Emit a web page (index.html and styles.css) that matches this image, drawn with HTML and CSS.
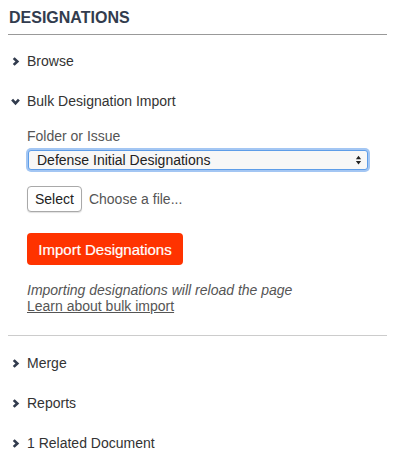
FILE: index.html
```html
<!DOCTYPE html>
<html>
<head>
<meta charset="utf-8">
<link rel="stylesheet" href="styles.css">
</head>
<body>
<div class="panel">
  <h2 class="panel-title">DESIGNATIONS</h2>
  <ul class="sections">
    <li class="section">
      <div class="section-head">
        <svg class="chev" viewBox="0 0 8 8"><path d="M2.4 1 L5.6 4 L2.4 7" /></svg>
        <span>Browse</span>
      </div>
    </li>
    <li class="section open">
      <div class="section-head">
        <svg class="chev" viewBox="0 0 8 8"><path d="M1 2.4 L4 5.6 L7 2.4" /></svg>
        <span>Bulk Designation Import</span>
      </div>
      <div class="section-body">
        <label class="field-label">Folder or Issue</label>
        <div class="select-wrap">
          <select class="select">
            <option>Defense Initial Designations</option>
          </select>
          <svg class="select-arrows" viewBox="0 0 8 12"><path d="M4 1 L7 5 L1 5 Z M4 11 L7 7 L1 7 Z" /></svg>
        </div>
        <div class="file-row">
          <button class="btn-select">Select</button>
          <span class="file-name">Choose a file...</span>
        </div>
        <button class="btn-import">Import Designations</button>
        <p class="note">Importing designations will reload the page</p>
        <a class="learn" href="#">Learn about bulk import</a>
      </div>
    </li>
    <li class="section">
      <div class="section-head">
        <svg class="chev" viewBox="0 0 8 8"><path d="M2.4 1 L5.6 4 L2.4 7" /></svg>
        <span>Merge</span>
      </div>
    </li>
    <li class="section">
      <div class="section-head">
        <svg class="chev" viewBox="0 0 8 8"><path d="M2.4 1 L5.6 4 L2.4 7" /></svg>
        <span>Reports</span>
      </div>
    </li>
    <li class="section">
      <div class="section-head">
        <svg class="chev" viewBox="0 0 8 8"><path d="M2.4 1 L5.6 4 L2.4 7" /></svg>
        <span>1 Related Document</span>
      </div>
    </li>
  </ul>
</div>
</body>
</html>
```
FILE: styles.css
```css
* { box-sizing: border-box; }
html, body { margin: 0; padding: 0; background: #fff; }
body {
  font-family: "Liberation Sans", Arial, sans-serif;
  color: #333;
  padding: 8px 9px 0 8px;
}
.panel { width: 379px; }
.panel-title {
  margin: 0;
  font-size: 16px;
  font-weight: bold;
  line-height: 20px;
  color: #323c4e;
  padding: 0 0 6px 1px;
  border-bottom: 1px solid #999;
}
.sections {
  list-style: none;
  margin: 0;
  padding: 6px 0 0 0;
}
.section-head {
  display: flex;
  align-items: center;
  padding: 10px 0;
  font-size: 14px;
  line-height: 20px;
  color: #333;
}
.chev {
  width: 9px;
  height: 9px;
  margin: 1px 7px 0 3px;
  flex: none;
}
.chev path {
  fill: none;
  stroke: #323c4e;
  stroke-width: 2.4;
  stroke-linecap: butt;
  stroke-linejoin: miter;
}
.section.open {
  border-bottom: 1px solid #ccc;
  margin-bottom: 7px;
}
.section-body {
  padding: 5px 0 21px 19px;
  display: flex;
  flex-direction: column;
  align-items: flex-start;
}
.field-label {
  font-size: 14px;
  line-height: 20px;
  color: #555;
}
.select-wrap {
  position: relative;
  width: 340px;
  margin: 4px 0 0 1px;
}
.select {
  -webkit-appearance: none;
  appearance: none;
  display: block;
  width: 340px;
  height: 20px;
  margin: 0;
  padding: 0 0 0 8px;
  font-family: "Liberation Sans", Arial, sans-serif;
  font-size: 14px;
  line-height: 18px;
  color: #222;
  background: #f7f7f7;
  border: 1px solid #5e9de8;
  border-radius: 3px;
  box-shadow: 0 0 0 2px #a3c6f3;
  outline: none;
}
.select-arrows {
  position: absolute;
  right: 6px;
  top: 4px;
  width: 7px;
  height: 12px;
}
.select-arrows path { fill: #222; }
.file-row {
  display: flex;
  align-items: center;
  margin-top: 16px;
}
.btn-select {
  height: 26px;
  padding: 0 7px;
  font-family: "Liberation Sans", Arial, sans-serif;
  font-size: 14px;
  color: #222;
  background: #fff;
  border: 1px solid #a9a9a9;
  border-radius: 4px;
  box-shadow: 0 1px 1px rgba(0,0,0,0.12);
}
.file-name {
  margin-left: 7px;
  font-size: 14px;
  color: #555;
}
.btn-import {
  margin-top: 21px;
  height: 32px;
  width: 156px;
  padding: 0;
  font-family: "Liberation Sans", Arial, sans-serif;
  font-size: 15px;
  color: #fff;
  background: #ff3300;
  border: none;
  border-radius: 4px;
  -webkit-text-stroke: 0.2px #fff;
}
.note {
  margin: 17px 0 0 0;
  font-size: 14px;
  line-height: 16px;
  font-style: italic;
  color: #555;
}
.learn {
  font-size: 14px;
  line-height: 16px;
  color: #555;
  text-decoration: underline;
}
```
